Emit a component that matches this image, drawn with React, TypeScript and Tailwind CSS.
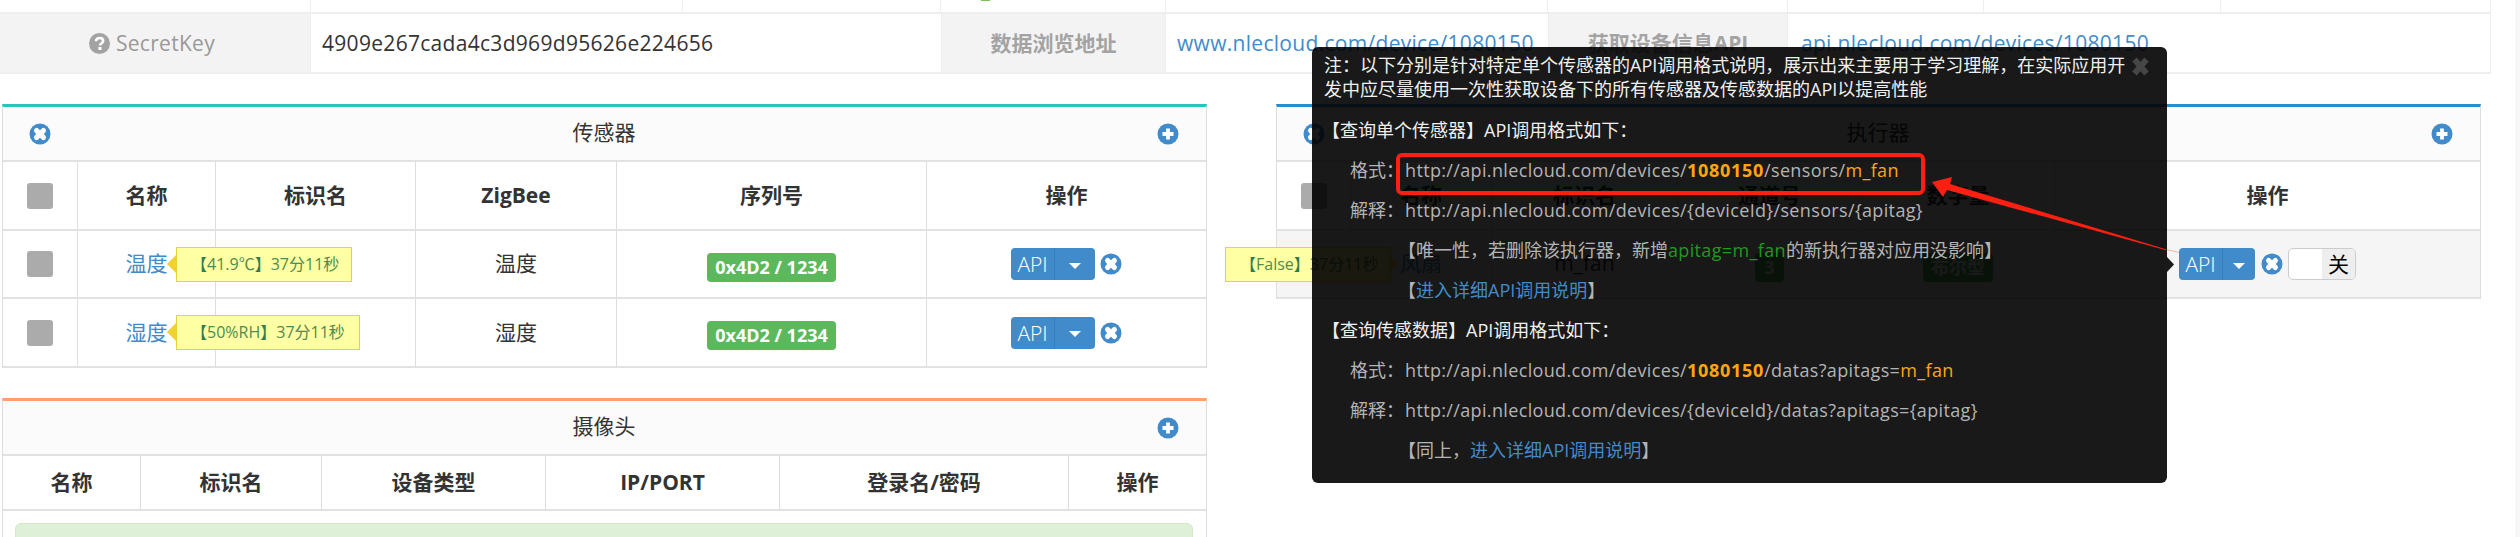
import React from "react";

const XIcon = () => (
  <svg width="22" height="22" viewBox="0 0 22 22" className="shrink-0">
    <circle cx="11" cy="11" r="10.5" fill="#428bca" />
    <path d="M7.6 7.6L14.4 14.4M14.4 7.6L7.6 14.4" stroke="#fff" strokeWidth="5.2" strokeLinecap="round" />
  </svg>
);
const PlusIcon = () => (
  <svg width="22" height="22" viewBox="0 0 22 22" className="shrink-0">
    <circle cx="11" cy="11" r="10.5" fill="#428bca" />
    <path d="M11 5.5V16.5M5.5 11H16.5" stroke="#fff" strokeWidth="3.8" />
  </svg>
);
const QIcon = () => (
  <svg width="21" height="21" viewBox="0 0 21 21" className="shrink-0">
    <circle cx="10.5" cy="10.5" r="10.5" fill="#a3a3a3" />
    <path d="M7 8.2C7 6.2 8.6 5 10.6 5C12.7 5 14.2 6.2 14.2 8C14.2 10.4 11 10.3 11 12.4" fill="none" stroke="#fff" strokeWidth="2.6" />
    <rect x="9.4" y="14" width="3.1" height="3" fill="#fff" />
  </svg>
);
const Check = () => <div className="w-[26px] h-[26px] rounded-[3px] bg-[#ababab]" />;
const Caret = () => (
  <svg width="12" height="6" viewBox="0 0 12 6"><path d="M0 0H12L6 6Z" fill="#fff" /></svg>
);
const Api = ({ wide }: { wide?: boolean }) => (
  <div className="flex h-[32px] rounded-[4px] overflow-hidden bg-[#428bca] text-white text-[21px] leading-[32px] font-light">
    <div className="w-[44px] text-center border-r border-[#357ebd]">API</div>
    <div className={wide ? "w-[40px] flex items-center justify-center pt-[3px]" : "w-[32px] flex items-center justify-center pt-[3px]"}>
      <Caret />
    </div>
  </div>
);
const Badge = ({ children }: { children: React.ReactNode }) => (
  <span className="inline-block h-[29px] px-[8px] mt-[6px] rounded-[4px] bg-[#5cb85c] text-white text-[18px] font-bold leading-[29px]">{children}</span>
);
const Tip = ({ value, className }: { value: string; className: string }) => (
  <div className={"absolute top-[16px] h-[35px] pl-[14px] bg-[#ffffa3] border border-[#f1d031] text-[16px] leading-[33px] text-[#4f8a50] whitespace-nowrap text-left " + className}>
    <span className="text-[#2f7d4f]">【</span>{value}<span className="text-[#2f7d4f]">】</span>37分11秒
  </div>
);

const Panel = ({ color, title, left, children }: { color: string; title: string; left?: boolean; children: React.ReactNode }) => (
  <div className={"border-x border-[#ddd] border-t-[3px] " + color}>
    <div className="h-[55px] bg-[#fbfbfb] border-b-2 border-[#e2e2e2] flex items-center justify-between pl-[26px] pr-[27px] text-[21px] text-[#333]">
      {left ? <XIcon /> : <div className="w-[22px]" />}
      <span className="-mt-[1px]">{title}</span>
      <PlusIcon />
    </div>
    {children}
  </div>
);

const Th = ({ children, className = "" }: { children?: React.ReactNode; className?: string }) => (
  <div className={"flex items-center justify-center font-bold text-[21px] text-[#333] border-r border-[#ddd] last:border-r-0 " + className}>{children}</div>
);
const Td = ({ children, className = "" }: { children?: React.ReactNode; className?: string }) => (
  <div className={"relative flex items-center justify-center text-[21px] text-[#333] border-r border-[#ddd] last:border-r-0 " + className}>{children}</div>
);

const SensorRow = ({ name, zig, tip, tipW, h }: { name: string; zig: string; tip: string; tipW: string; h: string }) => (
  <div className={"grid grid-cols-[75px_138px_200px_201px_310px_1fr] border-b-2 border-[#e2e2e2] " + h}>
    <Td><Check /></Td>
    <Td className="text-[#428bca]">
      {name}
      <Tip value={tip} className={"left-[98px] " + tipW} />
      <svg width="9" height="18" viewBox="0 0 9 18" className="absolute left-[89px] top-[24px]"><path d="M9 0V18L0 9Z" fill="#f1d031" /></svg>
    </Td>
    <Td />
    <Td>{zig}</Td>
    <Td><Badge>0x4D2 / 1234</Badge></Td>
    <Td className="gap-[5px]"><Api wide /><XIcon /></Td>
  </div>
);

const L = ({ label, children }: { label?: string; children: React.ReactNode }) => (
  <div className="flex pl-[38px] h-[40px] leading-[40px] text-[#b4b4b4] whitespace-nowrap">
    <div className="w-[55px] shrink-0">{label}</div>
    <div>{children}</div>
  </div>
);
const U = ({ children }: { children: React.ReactNode }) => <span className="tracking-[0.35px]">{children}</span>;
const Or = ({ children }: { children: React.ReactNode }) => <span className="text-[#ffa50d]">{children}</span>;
const Id = () => <b className="text-[#ffa50d] font-bold tracking-[0.7px]">1080150</b>;
const Lnk = ({ children }: { children: React.ReactNode }) => <span className="text-[#428bca]">{children}</span>;

const COLON = "\uFF1A";
const COMMA = "\uFF0C";

export default function App() {
  return (
    <div className="relative w-[2520px] h-[537px] overflow-hidden bg-white flex [font-family:'Open_Sans','Noto_Sans_CJK_SC',sans-serif]">
      <div className="w-[2515px] shrink-0">
        {/* top info table */}
        <div className="w-[2491px] border-r border-[#eee]">
          <div className="h-[14px] border-b-2 border-[#eee] grid grid-cols-[311px_372px_258px_225px_382px_240px_196px_237px_1fr] relative">
            {[0, 1, 2, 3, 4, 5, 6, 7].map((i) => (
              <div key={i} className="border-r border-[#eee]" />
            ))}
            <div />
            <div className="absolute left-[981px] top-0 w-[9px] h-[1px] bg-[#7ac35e]" />
          </div>
          <div className="h-[60px] border-b-2 border-[#eee] grid grid-cols-[311px_630px_225px_382px_240px_1fr] text-[21px] leading-[58px] whitespace-nowrap">
            <div className="bg-[#f3f3f3] border-r border-[#eee] flex items-center justify-center gap-[6px] pr-[6px] text-[#999] tracking-[0.3px]"><QIcon /><span>SecretKey</span></div>
            <div className="pl-[11px] text-[#333] tracking-[0.3px]">4909e267cada4c3d969d95626e224656</div>
            <div className="bg-[#f3f3f3] border-x border-[#eee] text-center font-bold text-[#a3a3a3]">数据浏览地址</div>
            <div className="pl-[11px] text-[#428bca] tracking-[0.3px]">www.nlecloud.com/device/1080150</div>
            <div className="bg-[#f3f3f3] border-x border-[#eee] text-center font-bold text-[#a3a3a3]">获取设备信息API</div>
            <div className="pl-[13px] text-[#428bca] tracking-[0.3px]">api.nlecloud.com/devices/1080150</div>
          </div>
        </div>

        <div className="flex mt-[30px] pl-[2px] gap-[69px]">
          {/* left column */}
          <div className="w-[1205px] shrink-0">
            <Panel color="border-t-[#26c6bc]" title="传感器" left>
              <div className="grid grid-cols-[75px_138px_200px_201px_310px_1fr] h-[69px] border-b-2 border-[#e2e2e2]">
                <Th><Check /></Th><Th>名称</Th><Th>标识名</Th><Th>ZigBee</Th><Th>序列号</Th><Th>操作</Th>
              </div>
              <SensorRow name="温度" zig="温度" tip="41.9℃" tipW="w-[176px]" h="h-[68px]" />
              <SensorRow name="湿度" zig="湿度" tip="50%RH" tipW="w-[184px]" h="h-[69px]" />
            </Panel>
            <div className="mt-[30px]">
              <Panel color="border-t-[#ffa06e]" title="摄像头">
                <div className="grid grid-cols-[138px_181px_224px_234px_289px_1fr] h-[55px] border-b-2 border-[#e2e2e2]">
                  <Th>名称</Th><Th>标识名</Th><Th>设备类型</Th><Th>IP/PORT</Th><Th>登录名/密码</Th><Th>操作</Th>
                </div>
                <div className="p-[12px] h-[60px]">
                  <div className="h-[40px] mr-[1px] rounded-[6px] bg-[#dff0d8] border border-[#d6e9c6]" />
                </div>
              </Panel>
            </div>
          </div>

          {/* right column */}
          <div className="w-[1205px] shrink-0">
            <Panel color="border-t-[#2a8fc9]" title="执行器" left>
              <div className="grid grid-cols-[74px_141px_186px_184px_193px_1fr] h-[69px] border-b-2 border-[#e2e2e2]">
                <Th><Check /></Th><Th>名称</Th><Th>标识名</Th><Th>通道号</Th><Th>数字量</Th><Th>操作</Th>
              </div>
              <div className="grid grid-cols-[74px_141px_186px_184px_193px_1fr] h-[68px] border-b-2 border-[#e2e2e2] bg-[#f5f5f5]">
                <Td><Check /></Td>
                <Td className="text-[#428bca]">
                  风扇
                  <Tip value="False" className="left-[-126px] w-[166px]" />
                  <svg width="6" height="14" viewBox="0 0 6 14" className="absolute left-[40px] top-[26px]"><path d="M0 0V14L6 7Z" fill="#f1d031" /></svg>
                </Td>
                <Td>m_fan</Td>
                <Td><span className="inline-block h-[29px] px-[9px] mt-[6px] rounded-[4px] bg-[#5cb85c] text-white text-[18px] font-bold leading-[29px]">3</span></Td>
                <Td><Badge>布尔型</Badge></Td>
                <Td>
                  <Api />
                  <div className="ml-[6px] mr-[5px]"><XIcon /></div>
                  <div className="flex h-[32px] w-[68px] rounded-[5px] border border-[#ccc] overflow-hidden bg-white">
                    <div className="w-[33px]" />
                    <div className="flex-1 bg-[#eee] text-[21px] leading-[30px] text-black text-center">关</div>
                  </div>
                </Td>
              </div>
            </Panel>
          </div>
        </div>
      </div>
      <div className="flex-1 bg-[#f7f7f7]" />

      {/* modal */}
      <div className="absolute left-[1312px] top-[47px] w-[855px] h-[436px] rounded-[6px] bg-black/90 text-[18px]">
        <div className="pt-[6px] pl-[12px] w-[818px] leading-[24px] text-[#f0f0f0]">
          {`注${COLON}以下分别是针对特定单个传感器的API调用格式说明${COMMA}展示出来主要用于学习理解${COMMA}在实际应用开发中应尽量使用一次性获取设备下的所有传感器及传感数据的API以提高性能`}
        </div>
        <svg width="17" height="19" viewBox="0 0 17 19" className="absolute left-[820px] top-[10px]">
          <path d="M2.5 2.5L14.5 16.5M14.5 2.5L2.5 16.5" stroke="#464646" strokeWidth="6" />
        </svg>
        <div className="mt-[9px]">
          <div className="pl-[10px] h-[40px] leading-[40px] text-[#efefef]">{`【查询单个传感器】API调用格式如下${COLON}`}</div>
          <L label={`格式${COLON}`}><U>http://api.nlecloud.com/devices/<Id />/sensors/<Or>m_fan</Or></U></L>
          <L label={`解释${COLON}`}><U>http://api.nlecloud.com/devices/{"{deviceId}"}/sensors/{"{apitag}"}</U></L>
          <L><span className="-ml-[7px]">{`【唯一性${COMMA}若删除该执行器${COMMA}新增`}<span className="text-[#1e9a1e] tracking-[0.35px]">apitag=m_fan</span>的新执行器对应用没影响】</span></L>
          <L><span className="-ml-[7px]">【<Lnk>进入详细API调用说明</Lnk>】</span></L>
          <div className="pl-[10px] h-[40px] leading-[40px] text-[#efefef]">{`【查询传感数据】API调用格式如下${COLON}`}</div>
          <L label={`格式${COLON}`}><U>http://api.nlecloud.com/devices/<Id />/datas?apitags=<Or>m_fan</Or></U></L>
          <L label={`解释${COLON}`}><U>http://api.nlecloud.com/devices/{"{deviceId}"}/datas?apitags={"{apitag}"}</U></L>
          <L><span className="-ml-[7px]">{`【同上${COMMA}`}<Lnk>进入详细API调用说明</Lnk>】</span></L>
        </div>
      </div>

      {/* annotation */}
      <svg width="2520" height="537" viewBox="0 0 2520 537" className="absolute left-0 top-0 pointer-events-none">
        <path d="M2167 257L2174 264.5L2167 272Z" fill="#1a1a1a" />
        <rect x="1398" y="155" width="525" height="38" rx="4" fill="none" stroke="#fb2012" strokeWidth="4" />
        <path d="M1932 182L1952 177L1950 184L2166 249.2L2166 250.2L1947 190L1943 197Z" fill="#fb2012" />
        <path d="M2166 249.4L2179 252.5" stroke="#fb2012" strokeOpacity="0.4" strokeWidth="0.8" />
      </svg>
    </div>
  );
}
